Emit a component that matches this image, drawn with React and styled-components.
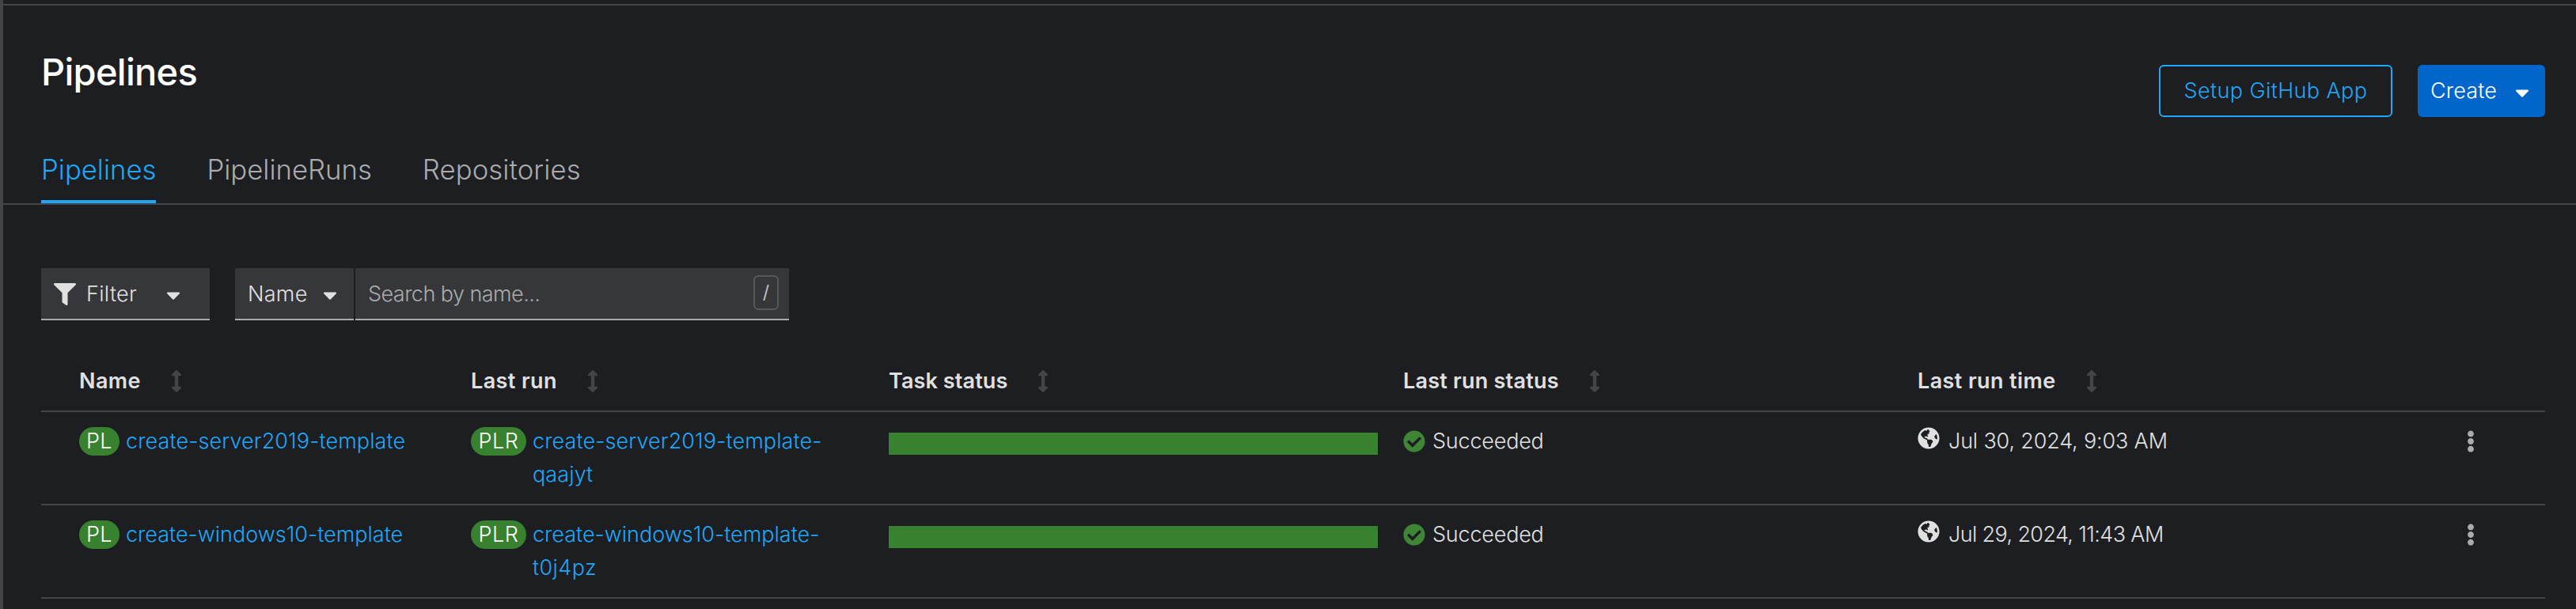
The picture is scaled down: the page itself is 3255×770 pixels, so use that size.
import React from "react";
import styled, { createGlobalStyle } from "styled-components";
import {
  FaArrowsAltV,
  FaCaretDown,
  FaCheckCircle,
  FaEllipsisV,
  FaFilter,
  FaGlobeAmericas,
} from "react-icons/fa";

const GlobalStyle = createGlobalStyle`
  *, *::before, *::after { box-sizing: border-box; }
  body {
    margin: 0;
    background: #1c1e22;
    color: #e0e0e0;
    font-family: Inter, "Liberation Sans", sans-serif;
    font-size: 27px;
    font-weight: 350;
    line-height: 42px;
    overflow: hidden;
  }
  svg { display: block; flex: none; }
`;

const Page = styled.div`
  width: 3255px;
  height: 770px;
  padding-top: 5px;
  border-left: 4px solid #434544;
  background: #1c1e22;
`;

const Masthead = styled.header`
  border-top: 2px solid #444548;
  border-bottom: 2px solid #444548;
  height: 254px;
  padding: 53px 39px 0 48px;
  display: flex;
  justify-content: space-between;
`;

const Heading = styled.div`
  display: flex;
  flex-direction: column;
  justify-content: space-between;
`;

const Title = styled.h1`
  margin: 0;
  color: #fff;
  font-size: 47px;
  font-weight: 450;
  line-height: 62px;
  letter-spacing: -0.72px;
`;

const Tabs = styled.nav`
  display: flex;
  gap: 64px;
`;

const Tab = styled.a`
  padding: 16px 0 12px;
  border-bottom: 4px solid ${(p) => (p.$active ? "#1fa7f8" : "transparent")};
  color: ${(p) => (p.$active ? "#1fa7f8" : "#aaabac")};
  font-size: 34.7px;
  line-height: 54px;
  letter-spacing: ${(p) => p.$tracking || 0}px;
`;

const Actions = styled.div`
  display: flex;
  align-items: flex-start;
  gap: 32px;
  padding-top: 22px;
`;

const Button = styled.button`
  display: flex;
  align-items: center;
  height: 66px;
  border: 2px solid ${(p) => (p.$primary ? "#0066cc" : "#1fa7f8")};
  border-radius: 6px;
  padding: 0 ${(p) => (p.$primary ? 14 : 12)}px;
  width: ${(p) => (p.$primary ? 161 : 295)}px;
  justify-content: ${(p) => (p.$primary ? "flex-start" : "center")};
  gap: 18px;
  background: ${(p) => (p.$primary ? "#0066cc" : "transparent")};
  color: ${(p) => (p.$primary ? "#fff" : "#1fa7f8")};
  font: inherit;
`;

const Text = styled.span`
  letter-spacing: ${(p) => p.$tracking || 0}px;
  white-space: nowrap;
`;

const Content = styled.main`
  padding: 80px 39px 0 48px;
`;

const Toolbar = styled.div`
  display: flex;
  gap: 32px;
`;

const InputGroup = styled.div`
  display: flex;
  gap: 2px;
`;

const Toggle = styled.button`
  display: flex;
  align-items: center;
  height: 66px;
  width: ${(p) => p.$width}px;
  padding: 0 16px;
  border: 0;
  border-bottom: 2px solid #aaabac;
  background: #36373a;
  color: #e0e0e0;
  font: inherit;
`;

const ToggleLabel = styled(Text)`
  padding-top: 2px;
  margin-left: ${(p) => p.$indent || 0}px;
  flex: 1;
  text-align: left;
`;

const FilterIcon = styled(FaFilter)`
  margin-top: 2px;
  font-size: 28px;
`;

const Caret = styled(FaCaretDown)`
  margin: 3px ${(p) => p.$end || 0}px 0 0;
  font-size: 28px;
`;

const SearchField = styled.div`
  display: flex;
  align-items: center;
  justify-content: space-between;
  width: 548px;
  height: 66px;
  padding: 0 13px 0 16px;
  border-bottom: 2px solid #aaabac;
  background: #36373a;
  color: #aaabac;
`;

const Placeholder = styled(Text)`
  padding-top: 2px;
`;

const Shortcut = styled.kbd`
  display: flex;
  align-items: center;
  justify-content: center;
  width: 32px;
  height: 44px;
  margin-top: -2px;
  border: 2px solid #57585a;
  border-radius: 6px;
  color: #c0c0c0;
  font: 400 23px Inter, sans-serif;
`;

const Table = styled.section`
  margin-top: 40px;
`;

const Row = styled.div`
  display: grid;
  grid-template-columns: 495px 528px 650px 650px 1fr 48px;
  padding: 16px 73px 16px 48px;
  border-bottom: 2px solid #444548;
`;

const HeadCell = styled.div`
  display: flex;
  align-items: center;
  gap: 31px;
  font-weight: 580;
`;

const SortIcon = styled(FaArrowsAltV)`
  color: #444548;
  font-size: 28px;
`;

const Cell = styled.div`
  display: flex;
  align-items: flex-start;
`;

const Badge = styled.span`
  display: flex;
  justify-content: center;
  width: ${(p) => p.$width}px;
  height: 36px;
  margin: 3px 8px 0 0;
  border-radius: 20px;
  background: #38812f;
  color: #fff;
  line-height: 36px;
  letter-spacing: 0.5px;
`;

const Link = styled.a`
  display: flex;
  flex-direction: column;
  color: #1fa7f8;
`;

const TaskBar = styled.div`
  width: 618px;
  height: 28px;
  margin-top: 10px;
  background: #38812f;
`;

const SuccessIcon = styled(FaCheckCircle)`
  margin: 7px 9px 0 0;
  color: #3e8635;
  font-size: 28px;
`;

const GlobeIcon = styled(FaGlobeAmericas)`
  margin: 3px 11px 0 0;
  font-size: 28px;
`;

const Kebab = styled(FaEllipsisV)`
  margin: 7px 0 0 13px;
  color: #aaabac;
  font-size: 28px;
`;

const columns = [
  { label: "Name", tracking: 0.4 },
  { label: "Last run", tracking: 0.4 },
  { label: "Task status", tracking: 0.1 },
  { label: "Last run status", tracking: 0.22 },
  { label: "Last run time", tracking: 0.4 },
];

const pipelines = [
  {
    name: "create-server2019-template",
    suffix: "qaajyt",
    time: "Jul 30, 2024, 9:03 AM",
    nameTracking: 0.1,
    suffixTracking: 0.1,
    timeTracking: -0.17,
  },
  {
    name: "create-windows10-template",
    suffix: "t0j4pz",
    time: "Jul 29, 2024, 11:43 AM",
    nameTracking: 0,
    suffixTracking: 0.4,
    timeTracking: -0.63,
  },
];

export default function App() {
  return (
    <>
      <GlobalStyle />
      <Page>
        <Masthead>
          <Heading>
            <Title>Pipelines</Title>
            <Tabs>
              <Tab $active>Pipelines</Tab>
              <Tab>PipelineRuns</Tab>
              <Tab $tracking={0.1}>Repositories</Tab>
            </Tabs>
          </Heading>
          <Actions>
            <Button>
              <Text $tracking={0.4}>Setup GitHub App</Text>
            </Button>
            <Button $primary>
              <Text $tracking={0.15}>Create</Text>
              <Caret />
            </Button>
          </Actions>
        </Masthead>

        <Content>
          <Toolbar>
            <Toggle $width={213}>
              <FilterIcon />
              <ToggleLabel $indent={13} $tracking={0.3}>Filter</ToggleLabel>
              <Caret $end={16} />
            </Toggle>
            <InputGroup>
              <Toggle $width={150}>
                <ToggleLabel $tracking={0.25}>Name</ToggleLabel>
                <Caret />
              </Toggle>
              <SearchField>
                <Placeholder $tracking={-0.55}>Search by name...</Placeholder>
                <Shortcut>/</Shortcut>
              </SearchField>
            </InputGroup>
          </Toolbar>

          <Table>
            <Row>
              {columns.map((column) => (
                <HeadCell key={column.label}>
                  <Text $tracking={column.tracking}>{column.label}</Text>
                  <SortIcon />
                </HeadCell>
              ))}
            </Row>
            {pipelines.map((p) => (
              <Row key={p.name}>
                <Cell>
                  <Badge $width={51}>PL</Badge>
                  <Link>
                    <Text $tracking={p.nameTracking}>{p.name}</Text>
                  </Link>
                </Cell>
                <Cell>
                  <Badge $width={70}>PLR</Badge>
                  <Link>
                    <Text $tracking={p.nameTracking}>{p.name}-</Text>
                    <Text $tracking={p.suffixTracking}>{p.suffix}</Text>
                  </Link>
                </Cell>
                <Cell>
                  <TaskBar />
                </Cell>
                <Cell>
                  <SuccessIcon />
                  <Text $tracking={-0.22}>Succeeded</Text>
                </Cell>
                <Cell>
                  <GlobeIcon />
                  <Text $tracking={p.timeTracking}>{p.time}</Text>
                </Cell>
                <Cell>
                  <Kebab />
                </Cell>
              </Row>
            ))}
          </Table>
        </Content>
      </Page>
    </>
  );
}
